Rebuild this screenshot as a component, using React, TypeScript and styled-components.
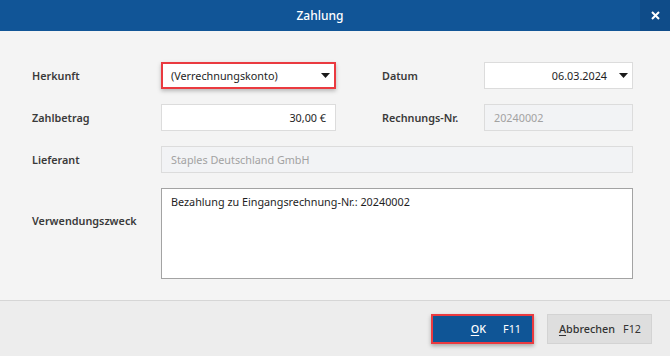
import React from "react";
import styled, { createGlobalStyle } from "styled-components";

const GlobalStyle = createGlobalStyle`
  html, body {
    margin: 0;
    padding: 0;
    background: #f4f4f4;
  }
  body {
    font-family: "Noto Sans", "Open Sans", sans-serif;
  }
`;

const Dialog = styled.div`
  width: 670px;
  height: 356px;
  display: flex;
  flex-direction: column;
  background: #f4f4f4;
  overflow: hidden;
`;

const TitleBar = styled.div`
  height: 31px;
  display: flex;
  background: #115597;
  flex-shrink: 0;
`;

const Title = styled.div`
  flex: 1;
  display: flex;
  justify-content: center;
  align-items: center;
  color: #fff;
  font-size: 12px;
  font-weight: 500;
`;

const CloseButton = styled.div`
  width: 30px;
  display: flex;
  justify-content: center;
  align-items: center;
  background: #0f4c89;
`;

const Body = styled.div`
  flex: 1;
  padding: 31px 37px 0 32px;
`;

const FormGrid = styled.div`
  display: grid;
  grid-template-columns: 129px 175px 148px 149px;
  grid-template-rows: 27px 27px 27px 91px;
  row-gap: 15px;
`;

const Label = styled.div<{ $indent?: boolean; $top?: number }>`
  display: flex;
  align-items: ${(p) => (p.$top ? "flex-start" : "center")};
  padding-left: ${(p) => (p.$indent ? "46px" : "0")};
  padding-top: ${(p) => (p.$top ? `${p.$top}px` : "0")};
  font-size: 10.8px;
  font-weight: 600;
  color: #3a3a3a;
`;

const Field = styled.div<{ $align?: string; $disabled?: boolean; $span?: number }>`
  box-sizing: border-box;
  display: flex;
  align-items: center;
  justify-content: ${(p) => (p.$align === "right" ? "flex-end" : "flex-start")};
  padding: 0 9px;
  font-size: 10.8px;
  color: ${(p) => (p.$disabled ? "#a2a2a2" : "#1e1e1e")};
  background: ${(p) => (p.$disabled ? "#f2f3f5" : "#fff")};
  border: 1px solid #dcdcdc;
  grid-column: ${(p) => (p.$span ? `span ${p.$span}` : "auto")};
`;

const Select = styled.div<{ $highlight?: boolean; $align?: string }>`
  box-sizing: border-box;
  display: flex;
  align-items: center;
  gap: 12px;
  padding: 0 4px 0 ${(p) => (p.$highlight ? "8px" : "9px")};
  font-size: 10.8px;
  color: #1e1e1e;
  background: #fff;
  border: ${(p) => (p.$highlight ? "2px solid #ea3a40" : "1px solid #dcdcdc")};
  box-shadow: ${(p) => (p.$highlight ? "0 2px 4px rgba(0,0,0,0.25)" : "none")};
  & > span {
    flex: 1;
    text-align: ${(p) => (p.$align === "right" ? "right" : "left")};
  }
`;

const TextArea = styled.div`
  box-sizing: border-box;
  grid-column: span 3;
  padding: 5px 9px;
  font-size: 10.8px;
  color: #1e1e1e;
  background: #fff;
  border: 1px solid #a3a3a3;
`;

const Footer = styled.div`
  height: 55px;
  flex-shrink: 0;
  display: flex;
  justify-content: flex-end;
  align-items: center;
  gap: 13px;
  padding-right: 18px;
  background: #ededed;
  border-top: 1px solid #d6d6d6;
`;

const Button = styled.div<{ $primary?: boolean; $width: number; $gap: number }>`
  box-sizing: border-box;
  width: ${(p) => p.$width}px;
  height: 30px;
  display: flex;
  justify-content: flex-end;
  align-items: center;
  gap: ${(p) => p.$gap}px;
  padding-right: ${(p) => (p.$primary ? 11 : 10)}px;
  font-size: 10.8px;
  font-weight: 500;
  color: ${(p) => (p.$primary ? "#fff" : "#333")};
  background: ${(p) => (p.$primary ? "#0f5596" : "#dedede")};
  border: ${(p) => (p.$primary ? "2px solid #ea3a40" : "1px solid #d3d3d3")};
  box-shadow: ${(p) => (p.$primary ? "0 2px 4px rgba(0,0,0,0.3)" : "none")};
  & u {
    text-underline-offset: 2px;
  }
`;

const Key = styled.span`
  font-weight: 400;
`;

const Arrow = () => (
  <svg width="9" height="5" viewBox="0 0 9 5">
    <path d="M0 0 H9 L4.5 5 Z" fill="#1a1a1a" />
  </svg>
);

const App: React.FC = () => {
  return (
    <Dialog>
      <GlobalStyle />
      <TitleBar>
        <Title>Zahlung</Title>
        <CloseButton>
          <svg width="9" height="9" viewBox="0 0 9 9">
            <path d="M1 1 L8 8 M8 1 L1 8" stroke="#fff" strokeWidth="2" />
          </svg>
        </CloseButton>
      </TitleBar>
      <Body>
        <FormGrid>
          <Label>Herkunft</Label>
          <Select $highlight>
            <span>(Verrechnungskonto)</span>
            <Arrow />
          </Select>
          <Label $indent>Datum</Label>
          <Select $align="right">
            <span>06.03.2024</span>
            <Arrow />
          </Select>

          <Label>Zahlbetrag</Label>
          <Field $align="right">30,00 €</Field>
          <Label $indent>Rechnungs-Nr.</Label>
          <Field $disabled>20240002</Field>

          <Label>Lieferant</Label>
          <Field $disabled $span={3}>
            Staples Deutschland GmbH
          </Field>

          <Label $top={25}>Verwendungszweck</Label>
          <TextArea>Bezahlung zu Eingangsrechnung-Nr.: 20240002</TextArea>
        </FormGrid>
      </Body>
      <Footer>
        <Button $primary $width={103} $gap={17}>
          <span>
            <u>O</u>K
          </span>
          <Key>F11</Key>
        </Button>
        <Button $width={105} $gap={8}>
          <span>
            <u>A</u>bbrechen
          </span>
          <Key>F12</Key>
        </Button>
      </Footer>
    </Dialog>
  );
};

export default App;
